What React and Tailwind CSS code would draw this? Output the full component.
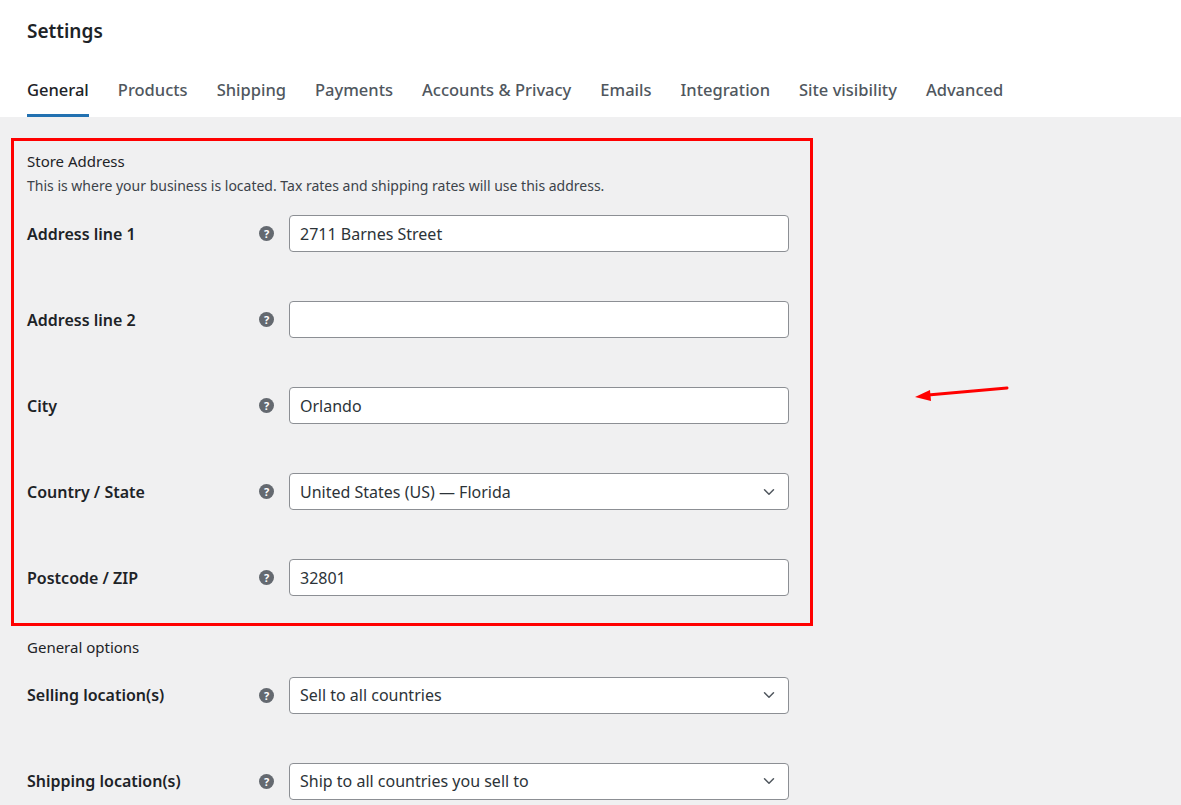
import { ChevronDown } from 'lucide-react';

const tabs = ['General', 'Products', 'Shipping', 'Payments', 'Accounts & Privacy', 'Emails', 'Integration', 'Site visibility', 'Advanced'];

function Help() {
  return (
    <span className="w-[15px] h-[15px] rounded-full bg-[#646970] text-white text-[11px] font-bold flex items-center justify-center leading-none">?</span>
  );
}

function Row({ label, value, select }) {
  return (
    <div className="flex items-center h-[86px]">
      <div className="w-[232px] text-[16px] font-semibold text-[#1d2327]">{label}</div>
      <div className="w-[30px] flex"><Help /></div>
      <div className="w-[500px] h-[37px] bg-white border border-[#8c8f94] rounded-[4px] flex items-center justify-between px-[10px] text-[16px] text-[#2c3338]">
        <span>{value}</span>
        {select && <ChevronDown size={18} strokeWidth={2} className="text-[#50575e]" />}
      </div>
    </div>
  );
}

export default function App() {
  return (
    <div className="relative min-h-screen bg-[#f0f0f1] overflow-hidden" style={{ fontFamily: '"Noto Sans", "Open Sans", sans-serif' }}>
      <div className="bg-white px-[27px]">
        <div className="h-[62px] flex items-center text-[19px] font-semibold text-[#1d2327]">Settings</div>
        <div className="flex gap-[29px] h-[55px]">
          {tabs.map((t, i) => (
            <div key={t} className={`pt-[16px] text-[16.5px] font-medium ${i === 0 ? 'text-[#1d2327] border-b-[3px] border-[#2271b1]' : 'text-[#50575e]'}`}>{t}</div>
          ))}
        </div>
      </div>

      <div className="ml-[11px] mt-[21px] w-[802px] border-[3px] border-[#ff0000] px-[13px] pt-[9px] pb-[2px]">
        <div className="text-[15px] text-[#1d2327]">Store Address</div>
        <div className="text-[14px] text-[#3c434a] mt-[2px]">This is where your business is located. Tax rates and shipping rates will use this address.</div>
        <div className="-mt-[5px]">
          <Row label="Address line 1" value="2711 Barnes Street" />
          <Row label="Address line 2" value="" />
          <Row label="City" value="Orlando" />
          <Row label="Country / State" value="United States (US) — Florida" select />
          <Row label="Postcode / ZIP" value="32801" />
        </div>
      </div>

      <div className="px-[27px] pt-[10px]">
        <div className="text-[15px] text-[#1d2327]">General options</div>
        <div className="-mt-[6px]">
          <Row label="Selling location(s)" value="Sell to all countries" select />
          <Row label="Shipping location(s)" value="Ship to all countries you sell to" select />
        </div>
      </div>

      <svg className="absolute left-[910px] top-[380px]" width="104" height="24" viewBox="0 0 104 24">
        <line x1="97" y1="8" x2="18" y2="15" stroke="#ff0000" strokeWidth="3" strokeLinecap="round" />
        <polygon points="5,17 20,10 21,21" fill="#ff0000" />
      </svg>
    </div>
  );
}
